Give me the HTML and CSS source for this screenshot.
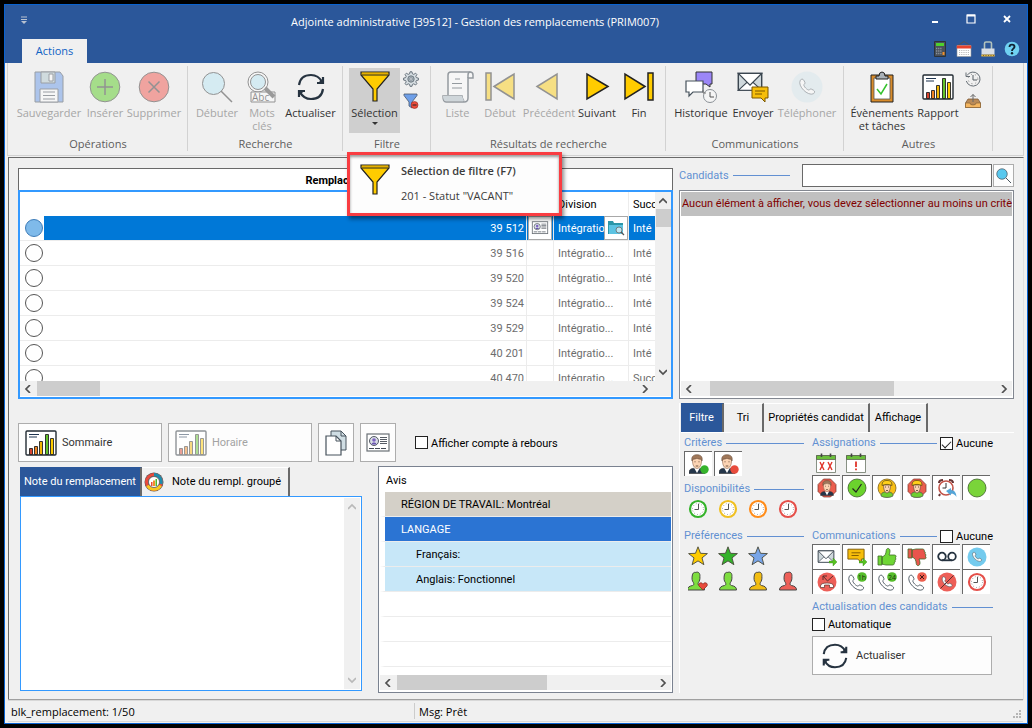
FILE: index.html
```html
<!DOCTYPE html>
<html lang="fr">
<head>
<meta charset="utf-8">
<title>Gestion des remplacements</title>
<link rel="stylesheet" href="styles.css">
</head>
<body>
<svg class="sprite" aria-hidden="true">
  <defs>
    <symbol id="refresh" viewBox="0 0 32 32">
      <g fill="none" stroke="#263340" stroke-width="2.200">
        <path d="M4 14C5 7 10 4 16 4s9 3 11 7"/><path d="M28 18c-1 7-6 10-12 10S7 25 5 21"/>
        <path d="M28 6v6h-6"/><path d="M4 26v-6h6"/>
      </g>
      <path d="M28 7v5h-5zM4 25v-5h5z" fill="#263340"/>
    </symbol>
    <symbol id="funnel" viewBox="0 0 32 32">
      <path d="M2 1h28v3L18 18v12h-4V18L2 4z" fill="#fc0" stroke="#222" stroke-width="1.2"/>
      <path d="M3 4h26" stroke="#222" fill="none"/><path d="M3 2.2h26" stroke="#d9a300" fill="none"/>
    </symbol>
    <symbol id="chart" viewBox="0 0 32 26">
      <rect x="1" y="1" width="30" height="24" rx="1" fill="#fff" stroke="#222b33" stroke-width="1.4"/>
      <path d="M4 4.500h10M4 7h8" stroke="#1f3550" stroke-width="1"/>
      <g stroke="#222" stroke-width=".9"><path fill="#d8432f" d="M4.500 18.500h3v6h-3z"/><path fill="#ef8420" d="M9.500 16.500h3v8h-3z"/><path fill="#f2b705" d="M14.500 11.500h3v13h-3z"/><path fill="#62c22c" d="M20.500 4.500h3v20h-3z"/><path fill="#fc0" d="M25.500 8.500h3v16h-3z"/></g>
    </symbol>
    <symbol id="lens" viewBox="0 0 32 32">
      <circle cx="12" cy="12" r="10.5" fill="#59c8ee" stroke="#47525c" stroke-width="1.4"/><path d="M20 20l10 10" stroke="#47525c" stroke-width="2"/>
    </symbol>
    <symbol id="gear" viewBox="0 0 16 16">
      <path d="M7 .8h2l.4 2 1.4.6 1.8-1.2 1.3 1.3-1.1 1.8.6 1.4 2 .4v2l-2 .4-.6 1.4 1.1 1.7-1.3 1.4-1.8-1.2-1.4.6-.4 1.9H7l-.4-1.9-1.4-.6L3.400 14l-1.300-1.400 1.100-1.700-.6-1.400-2-.4v-2l2-.4.6-1.400L2.100 3.500l1.300-1.300 1.800 1.200 1.400-.6z" fill="#d9e0e4" stroke="#5b6770" stroke-width=".9"/>
      <circle cx="8" cy="8" r="3.2" fill="#aab4bb" stroke="#5b6770" stroke-width=".8"/><circle cx="8" cy="8" r="1.200" fill="#fff" stroke="#5b6770" stroke-width=".6"/>
    </symbol>
    <symbol id="phone" viewBox="0 0 20 20">
      <path d="M2.500 2.500C4 .8 5.500 1 6.300 2.300l1.200 2.200c.6 1.100.2 2-1 2.700-.5 2 3.800 6.500 6 6.200.8-1.200 1.700-1.500 2.700-.9l2.200 1.200c1.400.9 1.400 2.300-.2 3.800C11 20.500-.8 9 2.500 2.500z" fill="#fff" stroke="#46525c" stroke-width="1"/>
    </symbol>
    <symbol id="bust" viewBox="0 0 20 20">
      <path d="M1.500 19c0-3 2-3.800 5-4.500 1.500-.4 1.500-1.500 1-2.800C6 10 5.800 7.500 6.200 5 6.500 2 8 1 9.800 1.400 12.500.3 14.300 2.500 13.900 5.500c.2 2.500-.3 4.700-1.600 6.200-.4 1.300-.3 2.400 1.200 2.800 3 .7 5 1.500 5 4.500z" stroke="#444" stroke-width="1"/>
    </symbol>
    <symbol id="face" viewBox="0 0 20 20">
      <path d="M2 19.500c0-3.500 1-4.500 4.500-5.200l3.500 2 3.500-2c3.500.7 4.500 1.700 4.500 5.200z" fill="#25364a" stroke="#333" stroke-width=".6"/>
      <path d="M7.500 14.500l2.500 4.500 2.500-4.500z" fill="#fff"/>
      <path d="M5.500 6.500c0-2 1-4 4.500-4s4.500 2 4.500 4c0 4.500-1.500 7.500-4.500 8-3-.5-4.500-3.500-4.500-8z" fill="#fbd3b3" stroke="#8a6248" stroke-width=".6"/>
      <path d="M5 7c-1-4 1-6.300 5-6.300s6 2.300 5 6.300l-1-1.800c-2 0-3-.3-4-1-1 .7-2.500 1-4 1z" fill="#a0785a" stroke="#5b4030" stroke-width=".5"/>
      <path d="M7.500 7.800h1M11.500 7.800h1M8.700 12h2.600" stroke="#4b3425" stroke-width=".8"/>
    </symbol>
    <symbol id="worker" viewBox="0 0 20 20">
      <path d="M4 18c0-2.500 1-3.300 3.500-4h5c2.500.7 3.500 1.500 3.500 4-3 2-9 2-12 0z" fill="#6fd02f" stroke="#555" stroke-width=".7"/>
      <path d="M6.500 7c0 4 1 7.500 3.500 8 2.500-.5 3.500-4 3.500-8z" fill="#fbd3b3" stroke="#704c34" stroke-width=".7"/>
      <path d="M5 7.500C5 3 7.500 2.500 10 2.500S15 3 15 7.500c-3-1.500-7-1.500-10 0z" fill="#ffcf1a" stroke="#665214" stroke-width=".8"/>
      <path d="M8 9h1M11 9h1M9 12.500h2" stroke="#4b3425" stroke-width=".8"/>
    </symbol>
    <symbol id="clock" viewBox="0 0 20 20">
      <circle cx="10" cy="10" r="8" fill="#fff" stroke="currentColor" stroke-width="2.200"/>
      <circle cx="10" cy="10" r="5.500" fill="none" stroke="#777" stroke-width="1" stroke-dasharray=".7 2.180"/>
      <path d="M10.500 5v5.500H6.500" fill="none" stroke="#555" stroke-width="1"/>
    </symbol>
    <symbol id="star" viewBox="0 0 20 20"><path d="M10 .8l2.500 6.500 6.900.3-5.400 4.300 1.900 6.800L10 14.900l-5.900 3.800L6 11.900.6 7.600l6.900-.3z" stroke="#4a4a3c" stroke-width=".9"/></symbol>
    <symbol id="env" viewBox="0 0 20 16"><path d="M1 1h18v13H1z" fill="#cfd8dc" stroke="#3b4650" stroke-width="1.100"/><path d="M1 14l6.500-6h5l6.500 6z" fill="#fff" stroke="#3b4650" stroke-width=".8"/><path d="M1 1l9 9 9-9z" fill="#fff" stroke="#3b4650"/></symbol>
    <symbol id="plus" viewBox="0 0 8 8"><path d="M0 3h4V0l4 4-4 4V5H0z" fill="#58c322" stroke="#34861a" stroke-width=".4"/></symbol>
    <symbol id="bubble" viewBox="0 0 20 16"><path d="M1 1h18v11h-3v4l-4-4H1z" fill="#f6be0b" stroke="#7a5600"/><path d="M5 5h10M5 8h8" stroke="#7a5600"/></symbol>
    <symbol id="cal" viewBox="0 0 20 20"><path d="M.5 2.500h19v17H.5z" fill="#fff" stroke="#7b8476" stroke-width=".9"/><path d="M.5 2.500h19v4H.5z" fill="#6bbf3c" stroke="#59624f" stroke-width=".8"/><path d="M5.500 .5v3.500M14.500 .5v3.500" stroke="#444" stroke-width="1.600"/></symbol>
    <symbol id="thumb" viewBox="0 0 20 20"><path d="M1 9h4v9H1zM5 10c3-1 4-3 4.200-6.500C9.500.5 13 .8 13 4c0 1.500-.4 2.800-1 4h5.500c2 0 2 2.500.6 2.700 1.200.4 1.100 2.300-.3 2.500.9.500.6 2.300-.7 2.400.6.800 0 2.400-1.400 2.400H9c-1.500 0-2.500-.8-4-.9z" stroke="#3f6b2a" stroke-width=".8"/></symbol>
    <symbol id="card" viewBox="0 0 24 20"><rect x="1" y="1" width="22" height="17" fill="#fff" stroke="#6a7076" stroke-width="1.200"/><circle cx="8" cy="8" r="4.500" fill="#d8dde6" stroke="#444b55" stroke-width=".9"/><path d="M5.500 11.500c.5-2 1.500-2 2.500-2s2 0 2.500 2z" fill="#6a55b0"/><circle cx="8" cy="7" r="1.800" fill="#7c62c0"/><path d="M14 4.500h7M14 6.500h7M14 8.500h7M14 10.500h7" stroke="#444b55" stroke-width=".9"/><path d="M3 15.500h17" stroke="#444b55" stroke-dasharray="5 1"/></symbol>
    <symbol id="left" viewBox="0 0 8 8"><path d="M6 0L2 4l4 4" fill="none" stroke="#505050" stroke-width="1.700"/></symbol>
    <symbol id="right" viewBox="0 0 8 8"><path d="M2 0l4 4-4 4" fill="none" stroke="#505050" stroke-width="1.700"/></symbol>
    <symbol id="up" viewBox="0 0 8 8"><path d="M0 6l4-4 4 4" fill="none" stroke="currentColor" stroke-width="1.700"/></symbol>
    <symbol id="down" viewBox="0 0 8 8"><path d="M0 2l4 4 4-4" fill="none" stroke="currentColor" stroke-width="1.700"/></symbol>
    <symbol id="history" viewBox="0 0 16 16"><path d="M2 4.500A7 7 0 1 1 1.300 10" fill="none" stroke="#666e75" stroke-width="1"/><path d="M1 1.500v4h4" fill="none" stroke="#666e75"/><path d="M8 4v5h4" fill="none" stroke="#555c63"/><circle cx="8" cy="8" r="4.800" fill="none" stroke="#888" stroke-dasharray="1 3"/></symbol>
  </defs>
</svg>

<div class="window">
  <header class="titlebar">
    <div class="title-row">
      <button class="quick" aria-label="Personnaliser"><svg width="8" height="8" viewBox="0 0 8 8"><path d="M1 1h6M1 3.500h6" stroke="#b9c2d0"/><path d="M1 5h6L4 8z" fill="#b9c2d0"/></svg></button>
      <h1>Adjointe administrative [39512] - Gestion des remplacements (PRIM007)</h1>
      <div class="win-buttons">
        <button aria-label="Réduire"><svg width="10" height="10" viewBox="0 0 10 10"><path d="M2 8h6" stroke="#fff" stroke-width="2"/></svg></button>
        <button aria-label="Agrandir"><svg width="10" height="10" viewBox="0 0 10 10"><path d="M1 1h8v8H1z" fill="none" stroke="#fff" stroke-width="1.200"/><path d="M1 1.500h8" stroke="#fff" stroke-width="2"/></svg></button>
        <button aria-label="Fermer"><svg width="10" height="10" viewBox="0 0 10 10"><path d="M2 2l6 6M8 2L2 8" stroke="#fff" stroke-width="1.800"/></svg></button>
      </div>
    </div>
    <div class="tab-row">
      <button class="ribbon-tab">Actions</button>
      <div class="utility">
        <button aria-label="Calculatrice"><svg viewBox="0 0 16 16"><path d="M2.500.5h11v15h-11z" fill="#49505a" stroke="#2c3238"/><path d="M4 2h8v3H4z" fill="#4ed12e"/><path d="M4 7.500h5.500M4 10h5.500M4 12.500h5.500" stroke="#89919b" stroke-width="1.400" stroke-dasharray="1.300 .8"/><path d="M10.500 11h2v3h-2z" fill="#f2902a"/></svg></button>
        <button aria-label="Calendrier"><svg viewBox="0 0 16 16"><path d="M1 5l7-4.500L15 5" fill="none" stroke="#555"/><path d="M1 4.500h14v11H1z" fill="#fff" stroke="#999" stroke-width=".6"/><path d="M.8 4.500h14.400v3H.8z" fill="#e8432d"/><path d="M3 9.500h10M3 11.500h10M3 13.500h10" stroke="#bbb" stroke-dasharray="1.200 1"/></svg></button>
        <button aria-label="Verrouiller"><svg viewBox="0 0 16 16"><path d="M4.500 8V2.500q0-1.500 1.500-1.500h4q1.500 0 1.500 1.500V8" fill="none" stroke="#b3c3bd" stroke-width="1.600"/><path d="M1.500 7.500h13v8h-13z" fill="#d8dee6"/><path d="M1.500 14.500h13" stroke="#8a6a1a" stroke-width="2"/><path d="M1.500 14.500h13" stroke="#e2be48" stroke-width="1" stroke-dasharray="1.500 1"/></svg></button>
        <button aria-label="Aide"><svg viewBox="0 0 16 16"><circle cx="8" cy="8" r="7.300" fill="#6fd1f2"/><path d="M5.500 6c0-3.300 5-3.100 5-.2C10.500 7.700 8 7.600 8 10" fill="none" stroke="#123" stroke-width="1.900"/><circle cx="8" cy="12.300" r="1.200" fill="#123"/></svg></button>
      </div>
    </div>
  </header>

  <nav class="ribbon">
    <section class="group ops">
      <div class="tools">
        <button class="tool" disabled><svg viewBox="0 0 32 32"><path d="M2 1h25l3 4v26H2z" fill="#5c8fe6" stroke="#333c48"/><path d="M8 1h14v11H8z" fill="#aac3c9" stroke="#333c48"/><path d="M16 3h4v7h-4z" fill="#fff" stroke="#333c48"/><path d="M7 18h18v13H7z" fill="#fff" stroke="#333c48"/><path d="M10 21h12M10 24.500h12M10 28h12" stroke="#333c48"/></svg><span>Sauvegarder</span></button>
        <button class="tool" disabled><svg viewBox="0 0 32 32"><circle cx="16" cy="16" r="14.800" fill="#4cc810" stroke="#222"/><path d="M16 8v16M8 16h16" stroke="#222" stroke-width="1.500"/></svg><span>Insérer</span></button>
        <button class="tool" disabled><svg viewBox="0 0 32 32"><circle cx="16" cy="16" r="14.800" fill="#f2483e" stroke="#222"/><path d="M10.500 10.500l11 11M21.500 10.500l-11 11" stroke="#222" stroke-width="1.500"/></svg><span>Supprimer</span></button>
      </div>
      <h2>Opérations</h2>
    </section>
    <section class="group find">
      <div class="tools">
        <button class="tool" disabled><svg viewBox="0 0 32 32"><circle cx="12.500" cy="12.500" r="11" fill="#b5e5f5" stroke="#222"/><path d="M20 20l11 11" stroke="#222" stroke-width="1.500"/></svg><span>Débuter</span></button>
        <button class="tool" disabled><svg viewBox="0 0 32 32"><circle cx="12" cy="11" r="10" fill="#fff" stroke="#222"/><circle cx="12" cy="11" r="7.500" fill="#b5e5f5" stroke="#222"/><path d="M5 21h24v10H5z" fill="#fff" stroke="#222"/><path d="M19 17l9 9" stroke="#333" stroke-width="4"/><text x="6" y="30" font-family="Open Sans" font-size="10" fill="#111">Abc</text></svg><span>Mots<br>clés</span></button>
        <button class="tool"><svg viewBox="0 0 32 32"><use href="#refresh"/></svg><span>Actualiser</span></button>
      </div>
      <h2>Recherche</h2>
    </section>
    <section class="group filter">
      <div class="tools">
        <div class="anchor">
          <button class="tool active" aria-describedby="tip"><svg viewBox="0 0 32 32"><use href="#funnel"/></svg><span>Sélection</span><i class="caret"></i></button>
          <div class="tooltip" id="tip" role="tooltip">
            <svg width="32" height="32"><use href="#funnel"/></svg>
            <div><strong>Sélection de filtre (F7)</strong><p>201 - Statut "VACANT"</p></div>
          </div>
        </div>
        <div class="minis">
          <button aria-label="Configurer"><svg viewBox="0 0 16 16"><use href="#gear"/></svg></button>
          <button aria-label="Retirer le filtre"><svg viewBox="0 0 16 16"><path d="M1 1h13v1.500L9 9v6l-3-2V9L1 2.500z" fill="#6e9fe8" stroke="#47566b" stroke-width=".8"/><circle cx="11.500" cy="12" r="3.500" fill="#ec4b3c" stroke="#8d2a22" stroke-width=".6"/><path d="M9.500 12h4" stroke="#222"/></svg></button>
        </div>
      </div>
      <h2>Filtre</h2>
    </section>
    <section class="group results">
      <div class="tools">
        <button class="tool" disabled><svg viewBox="0 0 32 32"><path d="M6 24V4q0-3 3-3h19q3 0 3 3v3h-5v20q0 4-4 4H4q-3 0-3-6h19q0 3 2 5" fill="#fff" stroke="#26333f" stroke-width="1.500"/><path d="M26 7V4q0-3 2.500-3" fill="none" stroke="#26333f" stroke-width="1.500"/><path d="M1 25h19l2 5H4q-3 0-3-5z" fill="#a9b7c0"/><path d="M13 8h5M10 12.500h10M10 17h10" stroke="#26333f"/></svg><span>Liste</span></button>
        <button class="tool" disabled><svg viewBox="0 0 32 32"><path d="M2 2h5v27H2zM10 15.500L30 3v25z" fill="#fc0" stroke="#222" stroke-width="1.500"/></svg><span>Début</span></button>
        <button class="tool" disabled><svg viewBox="0 0 32 32"><path d="M4 15.500L24 3v25z" fill="#fc0" stroke="#222" stroke-width="1.500"/></svg><span>Précédent</span></button>
        <button class="tool"><svg viewBox="0 0 32 32"><path d="M27 15.500L6 3v25z" fill="#fc0" stroke="#222" stroke-width="1.500"/></svg><span>Suivant</span></button>
        <button class="tool"><svg viewBox="0 0 32 32"><path d="M25 2h5v27h-5zM22 15.500L2 3v25z" fill="#fc0" stroke="#222" stroke-width="1.500"/></svg><span>Fin</span></button>
      </div>
      <h2>Résultats de recherche</h2>
    </section>
    <section class="group comm">
      <div class="tools">
        <button class="tool"><svg viewBox="0 0 32 32"><path d="M11 1h16v12h-2v3l-4-3H11z" fill="#9b86f7" stroke="#333"/><path d="M1 10h17v11H8l-4 4v-4H1z" fill="#fff" stroke="#46525c" stroke-width="1.200"/><circle cx="25" cy="25" r="6.500" fill="#f5f5f5" stroke="#8a9096"/><path d="M25 21v5h4" fill="none" stroke="#555"/><path d="M18 19v3h3" fill="none" stroke="#777"/></svg><span>Historique</span></button>
        <button class="tool"><svg viewBox="0 0 32 32"><use href="#env" x="0" y="1" width="26" height="21"/><path d="M15 16h16v11h-3v4l-4-4h-9z" fill="#f6be0b" stroke="#7a5600"/><path d="M18 20h10M18 23h7" stroke="#7a5600"/></svg><span>Envoyer</span></button>
        <button class="tool" disabled><svg viewBox="0 0 32 32"><circle cx="16" cy="16" r="15.500" fill="#d5e6ec"/><use href="#phone" x="7" y="7" width="18" height="18"/></svg><span>Téléphoner</span></button>
      </div>
      <h2>Communications</h2>
    </section>
    <section class="group other">
      <div class="tools">
        <button class="tool"><svg viewBox="0 0 32 32"><path d="M5 4h22v27H5z" fill="#d98c2b" stroke="#222"/><path d="M8 7h16v21H8z" fill="#fff" stroke="#555" stroke-width=".8"/><path d="M10 8V5h3q0-4 3-4t3 4h3v3z" fill="#a9b1b8" stroke="#222"/><path d="M11 18l4 5 6-10" fill="none" stroke="#35c22e" stroke-width="1.500"/></svg><span>Évènements<br>et tâches</span></button>
        <button class="tool"><svg viewBox="0 0 32 32"><use href="#chart" y="3" width="32" height="26"/></svg><span>Rapport</span></button>
        <div class="minis">
          <button aria-label="Historique"><svg viewBox="0 0 16 16"><use href="#history"/></svg></button>
          <button aria-label="Exporter"><svg viewBox="0 0 16 16"><path d="M3 6h10l2.500 4v4.500H.5V10z" fill="#b98a58" stroke="#7d5b38" stroke-width=".8"/><path d="M.5 10H5q0 2 3 2t3-2h4.500v4.500H.5z" fill="#f4b661" stroke="#8a6436" stroke-width=".7"/><path d="M8 9V1.500M5.500 4L8 1.500 10.500 4" fill="none" stroke="#666"/></svg></button>
        </div>
      </div>
      <h2>Autres</h2>
    </section>
  </nav>

  <main class="content">
    <div class="left">
      <h2 class="grid-title">Remplacements</h2>
      <div class="grid-box">
        <div class="grid-body">
          <div class="grid-clip">
            <table class="grid">
              <colgroup><col class="c-radio"><col><col class="c-icon"><col class="c-div"><col class="c-succ"></colgroup>
              <thead><tr><th></th><th></th><th></th><th>Division</th><th>Succ</th></tr></thead>
              <tbody>
                <tr class="selected"><td><input type="radio" name="r" checked aria-label="39 512"></td><td>39 512</td><td><button class="cell-btn" aria-label="Fiche"><svg width="18" height="14"><use href="#card"/></svg></button></td><td><div class="split"><span>Intégratio</span><button class="cell-btn" aria-label="Chercher"><svg width="18" height="18" viewBox="0 0 18 18"><path d="M1 2h5l1 2h9v11H1z" fill="#2b96a8"/><path d="M2 6h14v9H2z" fill="#5cc3e2"/><circle cx="12" cy="11" r="3" fill="#bfe7f3" stroke="#666" stroke-width=".8"/><path d="M14 13l3 3" stroke="#555" stroke-width="1.200"/></svg></button></div></td><td>Inté</td></tr>
                <tr><td><input type="radio" name="r" aria-label="39 516"></td><td>39 516</td><td></td><td>Intégratio...</td><td>Inté</td></tr>
                <tr><td><input type="radio" name="r" aria-label="39 520"></td><td>39 520</td><td></td><td>Intégratio...</td><td>Inté</td></tr>
                <tr><td><input type="radio" name="r" aria-label="39 524"></td><td>39 524</td><td></td><td>Intégratio...</td><td>Inté</td></tr>
                <tr><td><input type="radio" name="r" aria-label="39 529"></td><td>39 529</td><td></td><td>Intégratio...</td><td>Inté</td></tr>
                <tr><td><input type="radio" name="r" aria-label="40 201"></td><td>40 201</td><td></td><td>Intégratio...</td><td>Inté</td></tr>
                <tr><td><input type="radio" name="r" aria-label="40 470"></td><td>40 470</td><td></td><td>Intégratio...</td><td>Succ</td></tr>
              </tbody>
            </table>
          </div>
          <div class="vbar"><svg width="8" height="8"><use href="#up"/></svg><i class="vthumb"></i><svg width="8" height="8"><use href="#down"/></svg></div>
        </div>
        <div class="hbar inset"><svg width="8" height="8"><use href="#left"/></svg><i class="thumb-s"></i><svg width="8" height="8"><use href="#right"/></svg></div>
      </div>

      <div class="actions">
        <button class="big"><svg width="32" height="26"><use href="#chart"/></svg>Sommaire</button>
        <button class="big" disabled><svg width="32" height="26"><use href="#chart"/></svg>Horaire</button>
        <button class="square" aria-label="Copier"><svg width="22" height="26" viewBox="0 0 22 26"><path d="M6 1h10l5 5v14H6z" fill="#cfdde3" stroke="#46525c"/><path d="M1 6h10l5 5v14H1z" fill="#fff" stroke="#46525c" stroke-width="1.200"/><path d="M11 6v5h5M16 1v5h5" fill="none" stroke="#46525c"/></svg></button>
        <button class="square" aria-label="Carte"><svg width="26" height="20"><use href="#card"/></svg></button>
        <label class="check"><input type="checkbox"><span>Afficher compte à rebours</span></label>
      </div>

      <div class="lower">
        <div class="notes">
          <div class="tabs">
            <button class="tab on">Note du remplacement</button>
            <button class="tab"><svg width="20" height="20" viewBox="0 0 20 20"><circle cx="10" cy="10" r="9.500" fill="#555"/><circle cx="10" cy="10" r="7.500" fill="none" stroke="#e84b3c" stroke-width="3"/><path d="M10 2.500A7.500 7.500 0 0 1 17 12" fill="none" stroke="#1d8cab" stroke-width="3"/><path d="M16.500 13.500A7.500 7.500 0 0 1 3.500 13.500" fill="none" stroke="#f7c81e" stroke-width="3"/><circle cx="10" cy="10" r="5.500" fill="#fff" stroke="#555" stroke-width=".7"/><path d="M7 10h1.500v4H7z" fill="#e84b3c"/><path d="M9 8.500h2V14H9z" fill="#f2902a"/><path d="M11.500 7H13v7h-1.500z" fill="#4fb52a"/></svg>Note du rempl. groupé</button>
          </div>
          <div class="note-box">
            <textarea aria-label="Note du remplacement"></textarea>
            <div class="vbar muted"><svg width="8" height="8"><use href="#up"/></svg><svg width="8" height="8"><use href="#down"/></svg></div>
          </div>
        </div>
        <div class="avis">
          <h3>Avis</h3>
          <ul>
            <li class="tan">RÉGION DE TRAVAIL: Montréal</li>
            <li class="blue">LANGAGE</li>
            <li class="sky">Français:</li>
            <li class="sky">Anglais: Fonctionnel</li>
            <li></li><li></li><li></li>
          </ul>
          <div class="hbar"><svg width="8" height="8"><use href="#left"/></svg><i class="thumb-m"></i><svg width="8" height="8"><use href="#right"/></svg></div>
        </div>
      </div>
    </div>

    <div class="right">
      <div class="search">
        <label class="legend" for="q">Candidats</label>
        <input id="q" type="text">
        <button aria-label="Rechercher"><svg width="16" height="16"><use href="#lens"/></svg></button>
      </div>
      <div class="list">
        <p>Aucun élément à afficher, vous devez sélectionner au moins un critère</p>
        <div class="hbar"><svg width="8" height="8"><use href="#left"/></svg><i class="thumb-l"></i><svg width="8" height="8"><use href="#right"/></svg></div>
      </div>
      <div class="side">
        <div class="tabs">
          <button class="tab on">Filtre</button><button class="tab">Tri</button><button class="tab">Propriétés candidat</button><button class="tab">Affichage</button>
        </div>
        <div class="panel">
          <div class="col">
            <section class="crit">
              <h3 class="legend">Critères</h3>
              <div class="icons">
                <button class="sunk" aria-label="Critère vert"><svg viewBox="0 0 20 20"><use href="#face" x="-2" width="20" height="20"/><circle cx="15.500" cy="15.500" r="4.200" fill="#35b32b"/></svg></button>
                <button class="sunk" aria-label="Critère rouge"><svg viewBox="0 0 20 20"><use href="#face" x="-2" width="20" height="20"/><circle cx="15.500" cy="15.500" r="4.200" fill="#e84b3c"/></svg></button>
              </div>
            </section>
            <section class="dispo">
              <h3 class="legend">Disponibilités</h3>
              <div class="icons">
                <button class="flat green" aria-label="Disponible"><svg><use href="#clock"/></svg></button>
                <button class="flat yellow" aria-label="Partiel"><svg><use href="#clock"/></svg></button>
                <button class="flat orange" aria-label="Limité"><svg><use href="#clock"/></svg></button>
                <button class="flat red" aria-label="Indisponible"><svg><use href="#clock"/></svg></button>
              </div>
            </section>
            <section class="pref">
              <h3 class="legend">Préférences</h3>
              <div class="icons">
                <button class="flat" aria-label="Étoile jaune"><svg fill="#fc0"><use href="#star"/></svg></button>
                <button class="flat" aria-label="Étoile verte"><svg fill="#33b22a"><use href="#star"/></svg></button>
                <button class="flat" aria-label="Étoile bleue"><svg fill="#78a5e8"><use href="#star"/></svg></button>
                <span></span>
                <button class="flat" aria-label="Favori"><svg viewBox="0 0 20 20"><use href="#bust" x="-2" width="20" height="20" fill="#7edd40"/><path d="M15 19l-4-4c-1.500-3 2.500-4.500 4-1.800 1.500-2.700 5.500-1.200 4 1.800z" fill="#e84b3c" stroke="#7d2922" stroke-width=".7"/></svg></button>
                <button class="flat" aria-label="Vert"><svg fill="#7edd40"><use href="#bust"/></svg></button>
                <button class="flat" aria-label="Jaune"><svg fill="#f2bd12"><use href="#bust"/></svg></button>
                <button class="flat" aria-label="Rouge"><svg fill="#ed5f58"><use href="#bust"/></svg></button>
              </div>
            </section>
          </div>
          <div class="col wide">
            <section class="assign">
              <div class="head"><h3 class="legend">Assignations</h3><label class="check"><input type="checkbox" checked><span>Aucune</span></label></div>
              <div class="icons">
                <button class="flat" aria-label="Calendrier XX"><svg viewBox="0 0 20 20"><use href="#cal"/><path d="M4 9l4 8M8 9l-4 8M12 9l4 8M16 9l-4 8" stroke="#e0352b" stroke-width="1.400"/></svg></button>
                <button class="flat" aria-label="Calendrier alerte"><svg viewBox="0 0 20 20"><use href="#cal"/><path d="M10 8.500v5.500M10 15.500v1.800" stroke="#e0352b" stroke-width="1.800"/></svg></button>
              </div>
              <div class="icons">
                <button class="sunk" aria-label="Bloqué"><svg viewBox="0 0 20 20"><path d="M6.500 1h7L19 6.500v7L13.500 19h-7L1 13.500v-7z" fill="#ec5f4f" stroke="#76342b" stroke-width=".7"/><use href="#face" x="2" y="2" width="16" height="16"/></svg></button>
                <button class="sunk" aria-label="Accepté"><svg viewBox="0 0 20 20"><circle cx="10" cy="10" r="9" fill="#6bd32d" stroke="#3d6129" stroke-width=".8"/><path d="M5.500 10.500l3.500 3.500 5.500-8" fill="none" stroke="#222" stroke-width="1.200"/></svg></button>
                <button class="sunk" aria-label="Travailleur jaune"><svg viewBox="0 0 20 20"><circle cx="10" cy="10" r="9" fill="#f9bf16" stroke="#7d611b" stroke-width=".8"/><use href="#worker"/></svg></button>
                <button class="sunk" aria-label="Travailleur rouge"><svg viewBox="0 0 20 20"><path d="M6.500 1h7L19 6.500v7L13.500 19h-7L1 13.500v-7z" fill="#ec5f4f" stroke="#76342b" stroke-width=".7"/><use href="#worker"/></svg></button>
                <button class="sunk" aria-label="Réveil"><svg viewBox="0 0 20 20"><path d="M3 16l-1 2M2 5q0-3 4-3M12 2q4 0 4 3" stroke="#633" fill="none" stroke-width="2"/><circle cx="9" cy="10" r="7" fill="#fff" stroke="#c25348" stroke-width="1.600"/><path d="M9 5v5H5.500" fill="none" stroke="#333"/><path d="M9 13l5-3v2q5 0 5.500 7-2-3.500-5.500-3.500v2z" fill="#55a6d8"/></svg></button>
                <button class="sunk" aria-label="Libre"><svg viewBox="0 0 20 20"><circle cx="10" cy="10" r="9" fill="#7ad43a" stroke="#3d6129" stroke-width=".8"/></svg></button>
              </div>
            </section>
            <section class="commu">
              <div class="head"><h3 class="legend">Communications</h3><label class="check"><input type="checkbox"><span>Aucune</span></label></div>
              <div class="icons">
                <button class="sunk" aria-label="Courriel"><svg viewBox="0 0 20 20"><use href="#env" y="3" width="18" height="14"/><use href="#plus" x="12" y="11" width="8" height="8"/></svg></button>
                <button class="sunk" aria-label="Message"><svg viewBox="0 0 20 20"><use href="#bubble" y="1" width="18" height="15"/><use href="#plus" x="12" y="11" width="8" height="8"/></svg></button>
                <button class="sunk" aria-label="Pouce levé"><svg fill="#6fd636"><use href="#thumb"/></svg></button>
                <button class="sunk" aria-label="Pouce baissé"><svg class="flip" fill="#e9554d"><use href="#thumb"/></svg></button>
                <button class="sunk" aria-label="Boîte vocale"><svg viewBox="0 0 20 20"><g fill="none" stroke="#263340" stroke-width="1.800"><circle cx="5" cy="9.500" r="3.800"/><circle cx="15" cy="9.500" r="3.800"/><path d="M5 13.300h10"/></g></svg></button>
                <button class="sunk" aria-label="Appel"><svg viewBox="0 0 20 20"><circle cx="10" cy="10" r="9.500" fill="#74cbee"/><use href="#phone" x="4.500" y="4.500" width="11" height="11"/></svg></button>
                <button class="sunk" aria-label="Appel manqué"><svg viewBox="0 0 20 20"><circle cx="10" cy="10" r="9.500" fill="#ed5f58"/><path d="M6 4v4M6 4h4M6 4l4.500 5L16 4" fill="none" stroke="#5b302d"/><path d="M3.500 14q0-3 6.500-3t6.500 3v1.500h-4V13h-5v2.500h-4z" fill="#fff" stroke="#5b302d" stroke-width=".7"/></svg></button>
                <button class="sunk" aria-label="Rappel 1h"><svg viewBox="0 0 20 20"><use href="#phone" y="2" width="18" height="18"/><circle cx="15" cy="5" r="4.800" fill="#56bd2b"/><text x="15" y="7.500" text-anchor="middle" font-family="Open Sans" font-size="7" fill="#1d3510">1h</text></svg></button>
                <button class="sunk" aria-label="Rappel 24"><svg viewBox="0 0 20 20"><use href="#phone" y="2" width="18" height="18"/><circle cx="15" cy="5" r="4.800" fill="#56bd2b"/><text x="15" y="7.500" text-anchor="middle" font-family="Open Sans" font-size="7" fill="#1d3510">24</text></svg></button>
                <button class="sunk" aria-label="Appel annulé"><svg viewBox="0 0 20 20"><use href="#phone" y="2" width="18" height="18"/><circle cx="15" cy="5" r="4.800" fill="#ec5f4f"/><path d="M13 3l4 4M17 3l-4 4" stroke="#431b17"/></svg></button>
                <button class="sunk" aria-label="Ne pas appeler"><svg viewBox="0 0 20 20"><circle cx="10" cy="10" r="9.500" fill="#ed5f58"/><use href="#phone" x="4" y="4" width="12" height="12"/><path d="M3.500 16.500l13-13" stroke="#5b302d"/></svg></button>
                <button class="sunk red" aria-label="En attente"><svg><use href="#clock"/></svg></button>
              </div>
            </section>
            <section class="refresh">
              <h3 class="legend">Actualisation des candidats</h3>
              <label class="check"><input type="checkbox"><span>Automatique</span></label>
              <button class="big"><svg width="30" height="30"><use href="#refresh"/></svg>Actualiser</button>
            </section>
          </div>
        </div>
      </div>
    </div>
  </main>

  <footer class="status">
    <span>blk_remplacement: 1/50</span><span>Msg: Prêt</span>
    <svg width="12" height="12" viewBox="0 0 12 12"><path d="M8 1h2v2H8zM8 4h2v2H8zM5 4h2v2H5zM8 7h2v2H8zM5 7h2v2H5zM2 7h2v2H2z" fill="#b5b5b5"/></svg>
  </footer>
</div>
</body>
</html>
```

FILE: styles.css
```css
* { box-sizing: border-box; }
body {
  margin: 0;
  padding: 4px;
  background: #000;
  color: #000;
  font: 11px/14px Roboto, "Liberation Sans", sans-serif;
}
button, input, textarea { font: inherit; color: inherit; margin: 0; }
button { padding: 0; border: 0; background: none; }
h1, h2, h3, p, ul { margin: 0; padding: 0; font-size: 11px; font-weight: normal; }
svg { display: block; flex: none; }
.sprite { position: absolute; width: 0; height: 0; }

.window {
  display: flex;
  flex-direction: column;
  min-height: calc(100vh - 8px);
  border: 1px solid #0a63d1;
  background: #f0f0f0;
}

/* Title bar */
.titlebar, .ribbon, .status { font-family: "Open Sans", "Noto Sans", sans-serif; }
.titlebar { background: #2b579a; color: #fff; }
.title-row { display: flex; align-items: center; height: 34px; }
.quick { width: 36px; padding: 0 0 4px 15px; }
.title-row h1 { flex: 1; padding-right: 8px; text-align: center; }
.win-buttons { display: flex; padding: 0 2px 6px 0; }
.win-buttons button { display: flex; justify-content: center; width: 36px; }
.tab-row { display: flex; justify-content: space-between; height: 24px; padding: 0 7px 0 17px; }
.ribbon-tab { width: 65px; background: #f0f0f0; color: #0f62c4; }
.utility { display: flex; align-items: flex-start; gap: 8px; padding-top: 2px; }
.utility svg { width: 16px; height: 16px; }

/* Ribbon */
.ribbon {
  display: flex;
  margin: 0 3px 1px 2px;
  padding: 3px 0 4px;
  border: solid #d2d2d2;
  border-width: 0 1px 1px;
  height: 93px;
}
.group {
  display: flex;
  flex-direction: column;
  justify-content: space-between;
  padding: 2px 5px 0 6px;
  border-right: 1px solid #d2d2d2;
}
.group h2 { text-align: center; color: #5c5c5c; line-height: 15px; }
.tools { display: grid; }
.ops .tools { grid-template-columns: 70px 42px 56px; }
.find .tools { grid-template-columns: 46px 44px 53px; }
.filter .tools { grid-template-columns: 51px 25px; }
.results .tools { grid-template-columns: 41px 44px 54px 42px 42px; }
.comm .tools { grid-template-columns: 58px 46px 62px; }
.other .tools { grid-template-columns: 64px 48px 25px; }
.tool {
  display: flex;
  flex-direction: column;
  align-items: center;
  justify-content: flex-start;
  gap: 3px;
  width: 100%;
  height: 65px;
  padding-top: 3px;
  line-height: 13px;
  color: #333;
  white-space: nowrap;
}
.tool svg { width: 32px; height: 32px; }
.tool:disabled { color: #a6a6a6; }
.tool:disabled svg { opacity: .45; }
.tool.active { background: #cfcfcf; }
.caret { border: 3px solid transparent; border-top-color: #333; border-bottom: 0; }
.minis { display: flex; flex-direction: column; gap: 6px; padding: 3px 0 0 3px; }
.minis svg { width: 16px; height: 16px; }
.anchor { position: relative; }
.tooltip {
  position: absolute;
  z-index: 5;
  top: 84px;
  left: -2px;
  display: flex;
  gap: 10px;
  width: 215px;
  height: 64px;
  padding: 9px;
  border: 3px solid #f93c41;
  background: #fdfdfd;
  box-shadow: 2px 3px 4px rgba(0, 0, 0, .45), inset 0 2px 3px rgba(0, 0, 0, .4);
  color: #3b3b3b;
  white-space: nowrap;
}
.tooltip strong { display: block; margin-bottom: 11px; font-weight: 600; }

/* Content */
.content {
  flex: 1;
  display: grid;
  grid-template-columns: minmax(0, 1fr) 335px;
  gap: 6px;
  margin: 0 3px;
  padding: 6px 9px 7px;
  border: solid #696969;
  border-width: 1px 0 0 1px;
  border-right: 1px solid #e0e0e0;
}
.grid-title {
  height: 23px;
  margin-top: 4px;
  border: 1px solid #696969;
  border-bottom: 0;
  background: #fff;
  font-weight: bold;
  line-height: 24px;
  text-align: center;
}
.grid-box { height: 209px; border: 2px solid #39f; background: #fff; margin-top: -1px; }
.grid-body { display: flex; height: 189px; }
.grid-clip { flex: 1; min-width: 0; overflow: hidden; }
.grid { width: 100%; table-layout: fixed; border-collapse: separate; border-spacing: 0; }
.c-radio { width: 24px; }
.c-icon { width: 27px; }
.c-div { width: 75px; }
.c-succ { width: 26px; }
.grid th { height: 24px; padding: 2px 0 0 4px; font-weight: normal; text-align: left; white-space: nowrap; }
.grid td { height: 25px; padding: 2px 0 0 4px; border-bottom: 1px solid #ececec; color: #6d6d6d; white-space: nowrap; overflow: hidden; }
.grid td:nth-child(n+2):nth-child(-n+4), .grid th:nth-child(4) { border-right: 1px solid #ececec; }
.grid td:nth-child(1) { padding: 0 0 0 5px; }
.grid td:nth-child(2) { padding-right: 2px; text-align: right; }
.grid td:nth-child(3) { padding: 0; }
.grid .selected td:nth-child(4) { padding-top: 0; }
.grid .selected td:nth-child(n+2) { background: #0078d7; color: #fff; }
.grid input {
  display: block;
  appearance: none;
  width: 18px;
  height: 18px;
  border: 1px solid #555;
  border-radius: 50%;
  background: #fff;
}
.grid input:checked { background: #7fbaea; border-color: #3e7cb8; }
.cell-btn { display: flex; align-items: center; justify-content: center; width: 24px; height: 24px; border: 1px solid #a8a8a8; background: #fff; }
.grid td:nth-child(3) .cell-btn { margin-left: 1px; }
.split { display: flex; align-items: center; justify-content: space-between; }
.split span { overflow: hidden; padding-top: 2px; }
.split .cell-btn { flex: none; }

/* Scroll bars */
.hbar { display: flex; align-items: center; gap: 5px; height: 15px; padding: 0 4px; background: #f0f0f0; }
.hbar.inset { padding-right: 22px; }
.hbar i { height: 15px; background: #cdcdcd; }
.hbar svg:last-child { margin-left: auto; }
.thumb-s { width: 63px; }
.thumb-m { width: 150px; }
.thumb-l { width: 184px; margin-left: 12px; }
.vbar { display: flex; flex-direction: column; align-items: center; width: 16px; padding: 5px 0; background: #f0f0f0; color: #505050; }
.vbar svg:last-child { margin-top: auto; }
.vthumb { width: 15px; height: 18px; margin-top: 4px; background: #cdcdcd; }
.muted { color: #b9b9b9; }

/* Action buttons */
.actions { display: flex; align-items: center; gap: 6px; margin-top: 24px; }
.big { display: flex; align-items: center; gap: 5px; width: 144px; height: 39px; padding-left: 6px; border: 1px solid #adadad; background: #fdfdfd; color: #333; }
.big:disabled { color: #a3a3a3; }
.big:disabled svg { opacity: .5; }
.square { display: flex; align-items: center; justify-content: center; width: 36px; height: 39px; border: 1px solid #adadad; background: #fdfdfd; }
.check { display: flex; align-items: center; gap: 3px; }
.check span { padding-top: 2px; }
.actions .check { margin-left: 13px; }
.check input {
  appearance: none;
  display: grid;
  place-items: center;
  width: 13px;
  height: 13px;
  border: 1px solid #222;
  background: #fff;
}
.check input:checked::after {
  content: "";
  width: 8px;
  height: 4px;
  border: solid #222;
  border-width: 0 0 1px 1px;
  transform: rotate(-45deg);
}

/* Lower left */
.lower { display: grid; grid-template-columns: minmax(0, 344px) minmax(0, 1fr); gap: 16px; margin-top: 4px; }
.tabs { display: flex; }
.tab { display: flex; align-items: center; justify-content: center; gap: 8px; height: 29px; padding: 0 4px; border-top: 1px solid #fff; border-right: 2px solid #696969; white-space: nowrap; }
.tab.on { background: #2b579a; border-top-color: #2b579a; color: #fff; }
.notes { padding: 1px 0 0 2px; }
.notes .tab { width: 148px; padding: 0 2px; justify-content: flex-start; }
.notes .tab.on { width: 122px; padding: 0 4px; }
.note-box { display: flex; height: 195px; padding: 1px; border: 1px solid #39f; background: #fff; }
.note-box textarea { flex: 1; border: 0; resize: none; background: #fff; outline: 0; }
.avis { height: 227px; padding: 1px 1px 2px; border: 1px solid #7a8290; background: #fff; display: flex; flex-direction: column; }
.avis h3 { height: 24px; padding-left: 6px; line-height: 25px; }
.avis ul { flex: 1; list-style: none; }
.avis li { height: 25px; padding-left: 16px; border-bottom: 1px solid #ececec; border-left: 5px solid #fff; line-height: 26px; }
.avis .tan { background: #d4d0c8; }
.avis .blue { background: #2b74d3; color: #fff; }
.avis .sky { padding-left: 31px; background: #c7e7f8; }

/* Right column */
.legend { display: flex; align-items: center; gap: 4px; height: 14px; color: #6290d2; }
.legend::after { content: ""; flex: 1; height: 1px; background: #6290d2; }
.search { display: flex; align-items: stretch; gap: 1px; height: 23px; }
.search .legend { width: 111px; height: auto; margin-right: 11px; }
.search input { flex: 1; min-width: 0; border: 1px solid #696969; background: #fff; }
.search button { display: flex; align-items: center; justify-content: center; width: 21px; border: 1px solid #adadad; background: #fdfdfd; }
.list { display: flex; flex-direction: column; justify-content: space-between; height: 209px; margin-top: 3px; padding: 1px 1px 2px; border: 1px solid #828790; background: #fff; }
.list p { height: 24px; padding-left: 1px; overflow: hidden; background: #c0c0c0; color: #800000; line-height: 24px; white-space: nowrap; }
.side { margin-top: 4px; padding-left: 1px; border-left: 1px solid #fff; }
.side .tab:nth-child(1) { width: 43px; }
.side .tab:nth-child(2) { width: 40px; }
.side .tab:nth-child(3) { width: 106px; }
.side .tab:nth-child(4) { width: 58px; }
.panel { display: grid; grid-template-columns: 120px 181px; gap: 8px; padding: 3px 0 18px 3px; border-top: 1px solid #fff; }
.icons { display: grid; }
.col .icons { grid-template-columns: repeat(4, 30px); }
.col.wide .icons { grid-template-columns: repeat(6, 30px); }
.icons svg { width: 20px; height: 20px; }
.flat, .sunk { display: flex; align-items: center; justify-content: center; width: 28px; height: 25px; }
.sunk { border: solid #696969; border-width: 1px 0 0 1px; background: #fff; }
.crit .icons { margin-top: 1px; }
.dispo { margin-top: 6px; }
.pref { margin-top: 8px; }
.head { display: flex; justify-content: space-between; gap: 3px; }
.head .legend { width: 126px; }
.head .check { height: 14px; }
.commu { margin-top: 29px; }
.commu .icons { margin-top: 1px; }
.refresh { display: flex; flex-direction: column; gap: 2px; margin-top: 6px; }
.refresh .big { width: 180px; gap: 6px; margin-top: 2px; padding-left: 7px; }
.green { color: #35b32b; }
.yellow { color: #f0c022; }
.orange { color: #ff8c1a; }
.red { color: #e5504a; }
.flip { transform: scaleY(-1); }

/* Status bar */
.status { display: flex; align-items: center; margin: 0 4px 1px 3px; height: 22px; border: solid #d8d8d8; border-width: 1px 0; box-shadow: 0 -1px #a0a0a0; }
.status span { padding: 2px 0 0 4px; }
.status span:first-child { width: 407px; padding-left: 3px; border-right: 1px solid #ccc; }
.status svg { margin-left: auto; align-self: flex-end; }
```
